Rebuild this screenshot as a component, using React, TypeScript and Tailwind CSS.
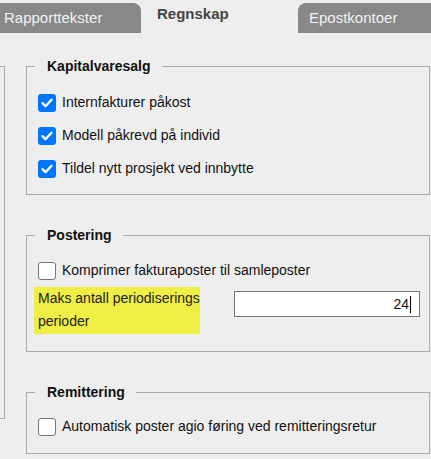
import React from 'react'

function Check({ checked }: { checked: boolean }) {
  if (checked) {
    return (
      <span className="flex items-center justify-center w-[18px] h-[18px] rounded-[3px] bg-[#0075ff] shrink-0">
        <svg width="14" height="14" viewBox="0 0 14 14">
          <path d="M2.5 7.2l3 3L11.5 3.8" fill="none" stroke="white" strokeWidth="2.4" strokeLinecap="round" strokeLinejoin="round" />
        </svg>
      </span>
    )
  }
  return <span className="block w-[18px] h-[18px] rounded-[3px] bg-white border border-[#767676] shrink-0" />
}

function CheckRow({ label, checked = false }: { label: string; checked?: boolean }) {
  return (
    <div className="flex items-center h-[33px] gap-[6px]">
      <Check checked={checked} />
      <span className="text-[14px] text-[#111]">{label}</span>
    </div>
  )
}

function Group({ title, className, children }: { title: string; className?: string; children: React.ReactNode }) {
  return (
    <fieldset className={'border border-[#aaaaaa] pl-[11px] ' + (className ?? '')}>
      <legend className="-ml-[3px] pl-[12px] pr-[11px] text-[14px] leading-[16px] font-bold text-[#111]">{title}</legend>
      {children}
    </fieldset>
  )
}

export default function App() {
  return (
    <div className="w-[431px] h-[459px] bg-[#eeeeee] overflow-hidden font-['Liberation_Sans',Arial,sans-serif]">
      {/* tabs */}
      <div className="flex items-end h-[33px]">
        <div className="w-[141px] h-[30px] bg-[#888888] rounded-tr-[8px] pl-[4px] pt-[6px] text-[15px] leading-[18px] text-[#f2f2f2]">
          Rapporttekster
        </div>
        <div className="ml-[4px] w-[150px] h-[33px] bg-[#eeeeee] rounded-t-[10px] pl-[12px] pt-[5px] text-[15px] leading-[18px] font-bold text-[#454545]">
          Regnskap
        </div>
        <div className="ml-[3px] flex-1 h-[30px] bg-[#888888] rounded-tl-[8px] pl-[11px] pt-[6px] text-[15px] leading-[18px] text-[#f2f2f2]">
          Epostkontoer
        </div>
      </div>

      <div className="flex">
        <div className="mt-[33px] w-[5px] h-[353px] border-r border-y border-[#aaaaaa]" />
        <div className="ml-[21px] w-[404px] mt-[25px] flex flex-col">
          <Group title="Kapitalvaresalg" className="pt-[12px] pb-[9px]">
            <CheckRow label="Internfakturer påkost" checked />
            <CheckRow label="Modell påkrevd på individ" checked />
            <CheckRow label="Tildel nytt prosjekt ved innbytte" checked />
          </Group>

          <Group title="Postering" className="mt-[32px] pt-[11px] pb-[17px]">
            <CheckRow label="Komprimer fakturaposter til samleposter" />
            <div className="flex items-start">
              <div className="-ml-[4px] w-[166px] h-[47px] pl-[4px] bg-[#eeee44] text-[14px] leading-[23px] text-[#222]">
                Maks antall periodiserings perioder
              </div>
              <div className="ml-[34px] mt-[4px] w-[186px] h-[26px] bg-white border border-[#767676] flex items-center justify-end pr-[8px] text-[14px] text-[#111]">
                24<span className="ml-[1px] w-[1px] h-[17px] bg-black" />
              </div>
            </div>
          </Group>

          <Group title="Remittering" className="mt-[32px] pt-[10px] pb-[10px]">
            <CheckRow label="Automatisk poster agio føring ved remitteringsretur" />
          </Group>
        </div>
      </div>
    </div>
  )
}
